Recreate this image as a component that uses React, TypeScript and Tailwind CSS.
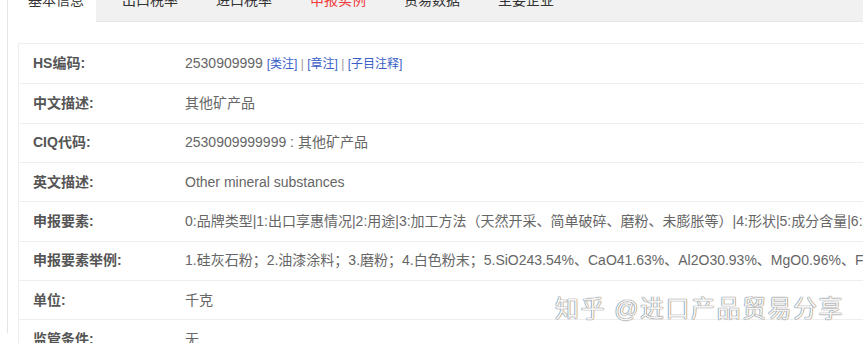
const tabs = ["基本信息", "出口税率", "进口税率", "申报实例", "贸易数据", "主要企业"];

const rows: { label: string; value: React.ReactNode }[] = [
  {
    label: "HS编码:",
    value: (
      <>
        2530909999{" "}
        <span className="text-[12px] text-[#3a5fc8]">[类注]</span>
        <span className="text-[12px] text-[#999]"> | </span>
        <span className="text-[12px] text-[#3a5fc8]">[章注]</span>
        <span className="text-[12px] text-[#999]"> | </span>
        <span className="text-[12px] text-[#3a5fc8]">[子目注释]</span>
      </>
    ),
  },
  { label: "中文描述:", value: "其他矿产品" },
  { label: "CIQ代码:", value: "2530909999999 : 其他矿产品" },
  { label: "英文描述:", value: "Other mineral substances" },
  {
    label: "申报要素:",
    value:
      "0:品牌类型|1:出口享惠情况|2:用途|3:加工方法（天然开采、简单破碎、磨粉、未膨胀等）|4:形状|5:成分含量|6:其他",
  },
  {
    label: "申报要素举例:",
    value:
      "1.硅灰石粉；2.油漆涂料；3.磨粉；4.白色粉末；5.SiO243.54%、CaO41.63%、Al2O30.93%、MgO0.96%、Fe2O30.32%",
  },
  { label: "单位:", value: "千克" },
  { label: "监管条件:", value: "无" },
];

export default function App() {
  return (
    <div
      className="relative w-[863px] h-[343px] overflow-hidden bg-white"
      style={{ fontFamily: '"Liberation Sans", "Noto Sans CJK SC", sans-serif' }}
    >
      <div className="ml-[7px] h-full border-l border-[#e3e3e3]">
        {/* tab bar */}
        <div className="flex h-[32px] -mt-[10px] bg-[#f1f1f1] border-b border-[#e6e6e6]">
          {tabs.map((t, i) => (
            <div
              key={t}
              className={`w-[88px] mr-[6px] pl-[20px] text-[14px] leading-[20px] whitespace-nowrap ${
                i === 0 ? "bg-white h-[33px] -mb-px" : ""
              } ${i === 3 ? "text-[#f03c3c]" : "text-[#333]"}`}
            >
              {t}
            </div>
          ))}
        </div>

        {/* info table */}
        <div className="pt-[21px] pl-[10px]">
          <div className="border-t border-l border-[#eeeeee]">
            {rows.map((r, i) => (
              <div
                key={r.label}
                className={`flex items-center h-[39.33px] text-[14px] whitespace-nowrap ${
                  i > 0 ? "border-t border-[#eeeeee]" : ""
                }`}
              >
                <div className="w-[166px] shrink-0 pl-[14px] font-bold text-[#555]">{r.label}</div>
                <div className="text-[#666]">{r.value}</div>
              </div>
            ))}
          </div>
        </div>
      </div>

      {/* watermark */}
      <div className="absolute left-[555px] top-[293px] text-[24px] leading-[32px] tracking-[1.5px] text-[#f4f4f4] whitespace-nowrap [text-shadow:0_0_1px_#666,0_0_1px_#666]">
        知乎 @进口产品贸易分享
      </div>
    </div>
  );
}
